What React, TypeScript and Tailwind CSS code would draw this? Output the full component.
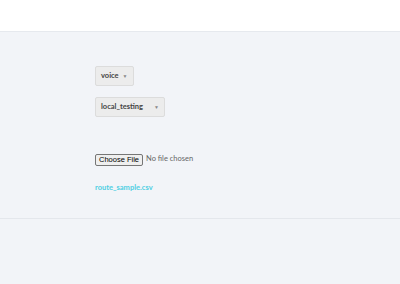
export default function App() {
  return (
    <div className="w-[400px] h-[284px] bg-[#f2f4f8] font-['Lato',sans-serif] overflow-hidden">
      <div className="h-[32px] bg-white border-b border-[#e6e9ee]" />
      <div className="h-[187px] border-b border-[#e4e7ec] pl-[95px] pt-[34px] flex flex-col items-start">
        <div className="flex items-center h-[20px] px-[5px] gap-[4px] bg-[#ececec] border border-[#dcdcdc] rounded-[2px] text-[7.5px] font-bold text-[#444] leading-none">
          <span>voice</span>
          <span className="text-[5px] text-[#888]">▼</span>
        </div>
        <div className="mt-[11px] flex items-center justify-between w-[70px] h-[20px] px-[5px] bg-[#ececec] border border-[#dcdcdc] rounded-[2px] text-[7.5px] font-bold text-[#444] leading-none">
          <span>local_testing</span>
          <span className="text-[5px] text-[#888]">▼</span>
        </div>
        <div className="mt-[37px] flex items-start gap-[3px]">
          <button className="h-[12px] px-[3px] bg-[#efefef] border border-[#767676] rounded-[2px] text-[7.5px] leading-none text-black font-['Liberation_Sans',sans-serif]">
            Choose File
          </button>
          <span className="text-[7.5px] leading-none text-[#666] mt-[1px]">No file chosen</span>
        </div>
        <div className="mt-[18px] text-[7.5px] leading-none font-bold text-[#4fcfe3]">route_sample.csv</div>
      </div>
    </div>
  );
}
